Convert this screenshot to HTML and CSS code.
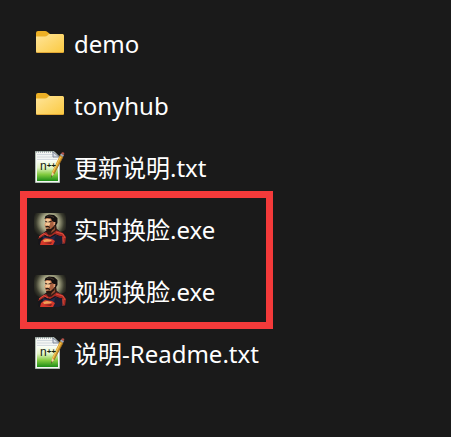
FILE: index.html
```html
<!DOCTYPE html>
<html lang="zh-CN">
<head>
    <meta charset="UTF-8">
    <meta name="viewport" content="width=device-width, initial-scale=1.0">
    <title>tonyhub</title>
    <link rel="stylesheet" href="styles.css">
</head>
<body>
    <!-- Shared icons -->
    <svg class="icon-defs" aria-hidden="true">
        <defs>
            <linearGradient id="folder-front" x1="0" y1="0" x2="1" y2="1">
                <stop offset="0" stop-color="#ffe59a"/>
                <stop offset="1" stop-color="#fbc940"/>
            </linearGradient>
            <linearGradient id="note-green" x1="0" y1="0" x2="0" y2="1">
                <stop offset="0" stop-color="#ffffff"/>
                <stop offset="0.4" stop-color="#e2f4c4"/>
                <stop offset="0.7" stop-color="#83cb40"/>
                <stop offset="1" stop-color="#1c8d16"/>
            </linearGradient>
            <radialGradient id="hero-glow" cx="0.5" cy="0.3" r="0.55">
                <stop offset="0" stop-color="#f0efd0"/>
                <stop offset="0.5" stop-color="#a5a584"/>
                <stop offset="0.8" stop-color="#3c3d2f"/>
                <stop offset="1" stop-color="#1b1b18"/>
            </radialGradient>
        </defs>

        <symbol id="icon-folder" viewBox="0 0 32 32">
            <path fill="#edb025" d="M2 6Q2 4 4 4H11Q12.500 4 13.500 5L16 7H29V15H2Z"/>
            <path fill="url(#folder-front)" d="M2 9.500H11Q12.500 9.500 13.500 8.500L15 7H28.500Q30 7 30 8.500V24.500Q30 26 28.500 26H3.500Q2 26 2 24.500Z"/>
            <path fill="#d99a2b" d="M2.500 25.200H29.500Q29.200 26 28.500 26H3.500Q2.800 26 2.500 25.200Z"/>
        </symbol>

        <symbol id="icon-note" viewBox="0 0 32 32">
            <path fill="#f4f6f3" stroke="#aebbb0" d="M1.500 .5H20L25.500 6V31.500H1.500Z"/>
            <path fill="url(#note-green)" d="M3 8H24V30H3Z"/>
            <path stroke="#c2cbd2" stroke-width=".7" d="M3 3.500H19M3 6H20M3 8.500H23"/>
            <path stroke="#6e7984" stroke-dasharray="1 1" d="M2 1H20"/>
            <path fill="#dce1e8" stroke="#7f8797" d="M19 1V6H25Z"/>
            <path fill="#d79a28" d="M26 4L29 6L20 23L17.500 25.500L18 21Z"/>
            <path stroke="#f5cf67" d="M26.500 6L18.700 21.500"/>
            <path stroke="#94651e" stroke-width=".8" d="M28.800 6.300L20 23"/>
            <path fill="#a7a8b2" d="M26 4L27 2.500L30 4L29 6Z"/>
            <path fill="#b65349" d="M27 2.500Q28.500 .3 30.300 1.900L30 4Z"/>
            <path fill="#ead6aa" d="M18 21L20 23L17.300 26Z"/>
            <path fill="#41371f" d="M17.600 24L18.400 25L17 27Z"/>
        </symbol>

        <symbol id="icon-hero" viewBox="0 0 32 32">
            <path fill="url(#hero-glow)" d="M0 0H32V32H0Z"/>
            <!-- darker lower corners -->
            <path fill="#1a1a1a" d="M0 20L5 22L4 32H0ZM27 19L32 17V32H27Z"/>
            <!-- cape and suit -->
            <path fill="#16151c" d="M5 32Q3 25 8 21L13 17L23 16L30 22L32 32Z"/>
            <path fill="#a62a23" d="M4 26Q6 21 12 19L15 22L22 17L29 20L32 24L31 31L28 28L26 23L21 21L16 24L11 22L6 25Z"/>
            <path fill="#252a48" d="M9 23L16 25L22 22L25 24L24 32H8Z"/>
            <path fill="#1b1d30" d="M21 23L28 23L29 30L25 32H19Z"/>
            <path fill="#d5382a" d="M7 28L11 25L18 26L21 28L19 32H6Z"/>
            <path fill="#efa158" d="M9 27L13 26L18 27L16 28.500L10 29Z"/>
            <path fill="#7c2020" d="M10 30L18 29L17 31Z"/>
            <path stroke="#ed5545" stroke-width=".8" fill="none" d="M22 19L29 21L31 25M5 24L10 20.500L14 23M29 24V31"/>
            <!-- neck -->
            <path fill="#351d17" d="M13 17L22 11L23 17L17 22L13 20Z"/>
            <path fill="#8e4c30" d="M18 16L21 13L21 17L17 20Z"/>
            <!-- face -->
            <path fill="#d58d60" d="M11 5L18 5L21 8L20 14L16 18L12 17L11.500 14L10.500 12L11.500 9Z"/>
            <path fill="#f7c795" d="M12 6L16 6L16.500 11L14.500 13L12 12.500L11.200 11.800L12.200 9Z"/>
            <path fill="#aa6140" d="M17 7H20V13L17 16L15.500 13Z"/>
            <!-- hair -->
            <path fill="#130f0e" d="M10.500 6L11.500 3L15 1.500L20 2L23.500 5L23.500 10L21.500 13L20.500 13L20 9L18 8L17 5.500L13 5Z"/>
            <path fill="#dc9970" d="M19.500 9H21.500L21 12L19.500 12.500Z"/>
            <!-- brow, moustache and goatee -->
            <path stroke="#21140f" fill="none" d="M11.300 8.500L13.300 9M14.500 9L17.500 8.500"/>
            <path fill="#24150f" d="M11.500 13L14 12.800L16.300 14L15.500 15L14 14.200L11.700 14.500Z"/>
            <path fill="#24150f" d="M12 16L15 15.500L17 15.800L20.500 12.500V15L16.500 18.500L12.800 18.200Z"/>
            <path stroke="#4c392d" stroke-width=".8" fill="none" d="M13 3.500L16 2.800L20 4.500"/>
        </symbol>
    </svg>

    <ul class="file-list">
        <li>
            <a class="file" href="#demo">
                <svg class="file-icon" aria-hidden="true"><use href="#icon-folder"/></svg>
                <span class="file-name">demo</span>
            </a>
        </li>
        <li>
            <a class="file" href="#tonyhub">
                <svg class="file-icon" aria-hidden="true"><use href="#icon-folder"/></svg>
                <span class="file-name">tonyhub</span>
            </a>
        </li>
        <li>
            <a class="file" href="#changelog">
                <svg class="file-icon" viewBox="0 0 32 32" aria-hidden="true">
                    <use href="#icon-note"/>
                    <text class="note-n" x="6" y="19">n<tspan class="note-plus" dy="-2">++</tspan></text>
                </svg>
                <span class="file-name">更新说明.txt</span>
            </a>
        </li>
        <li>
            <ul class="highlight">
                <li>
                    <a class="file" href="#live">
                        <svg class="file-icon" aria-hidden="true"><use href="#icon-hero"/></svg>
                        <span class="file-name">实时换脸.exe</span>
                    </a>
                </li>
                <li>
                    <a class="file" href="#video">
                        <svg class="file-icon" aria-hidden="true"><use href="#icon-hero"/></svg>
                        <span class="file-name">视频换脸.exe</span>
                    </a>
                </li>
            </ul>
        </li>
        <li>
            <a class="file" href="#readme">
                <svg class="file-icon" viewBox="0 0 32 32" aria-hidden="true">
                    <use href="#icon-note"/>
                    <text class="note-n" x="6" y="19">n<tspan class="note-plus" dy="-2">++</tspan></text>
                </svg>
                <span class="file-name">说明-Readme.txt</span>
            </a>
        </li>
    </ul>
</body>
</html>
```
FILE: styles.css
```css
body {
    font-family: "Noto Sans", "Noto Sans CJK SC", sans-serif;
    background-color: #1a1a1a;
    color: #fff;
    margin: 0;
}
ul {
    list-style: none;
    margin: 0;
    padding: 0;
}
.icon-defs {
    position: absolute;
    width: 0;
    height: 0;
}
.file-list {
    padding: 12px 27px;
}
.file {
    display: flex;
    align-items: center;
    gap: 8px;
    height: 62px;
    padding-left: 7px;
    color: inherit;
    text-decoration: none;
}
.file-icon {
    flex: none;
    width: 32px;
    height: 32px;
}
.file-name {
    padding-top: 2px;
    font-size: 24px;
    line-height: 32px;
    white-space: nowrap;
}
/* Red frame around the two programs */
.highlight {
    max-width: 239px;
    outline: 7px solid #f43a3a;
}
.note-n {
    font-family: "Liberation Sans", sans-serif;
    font-size: 12px;
    fill: #17210f;
}
.note-plus {
    font-size: 8px;
    font-weight: bold;
}
```
